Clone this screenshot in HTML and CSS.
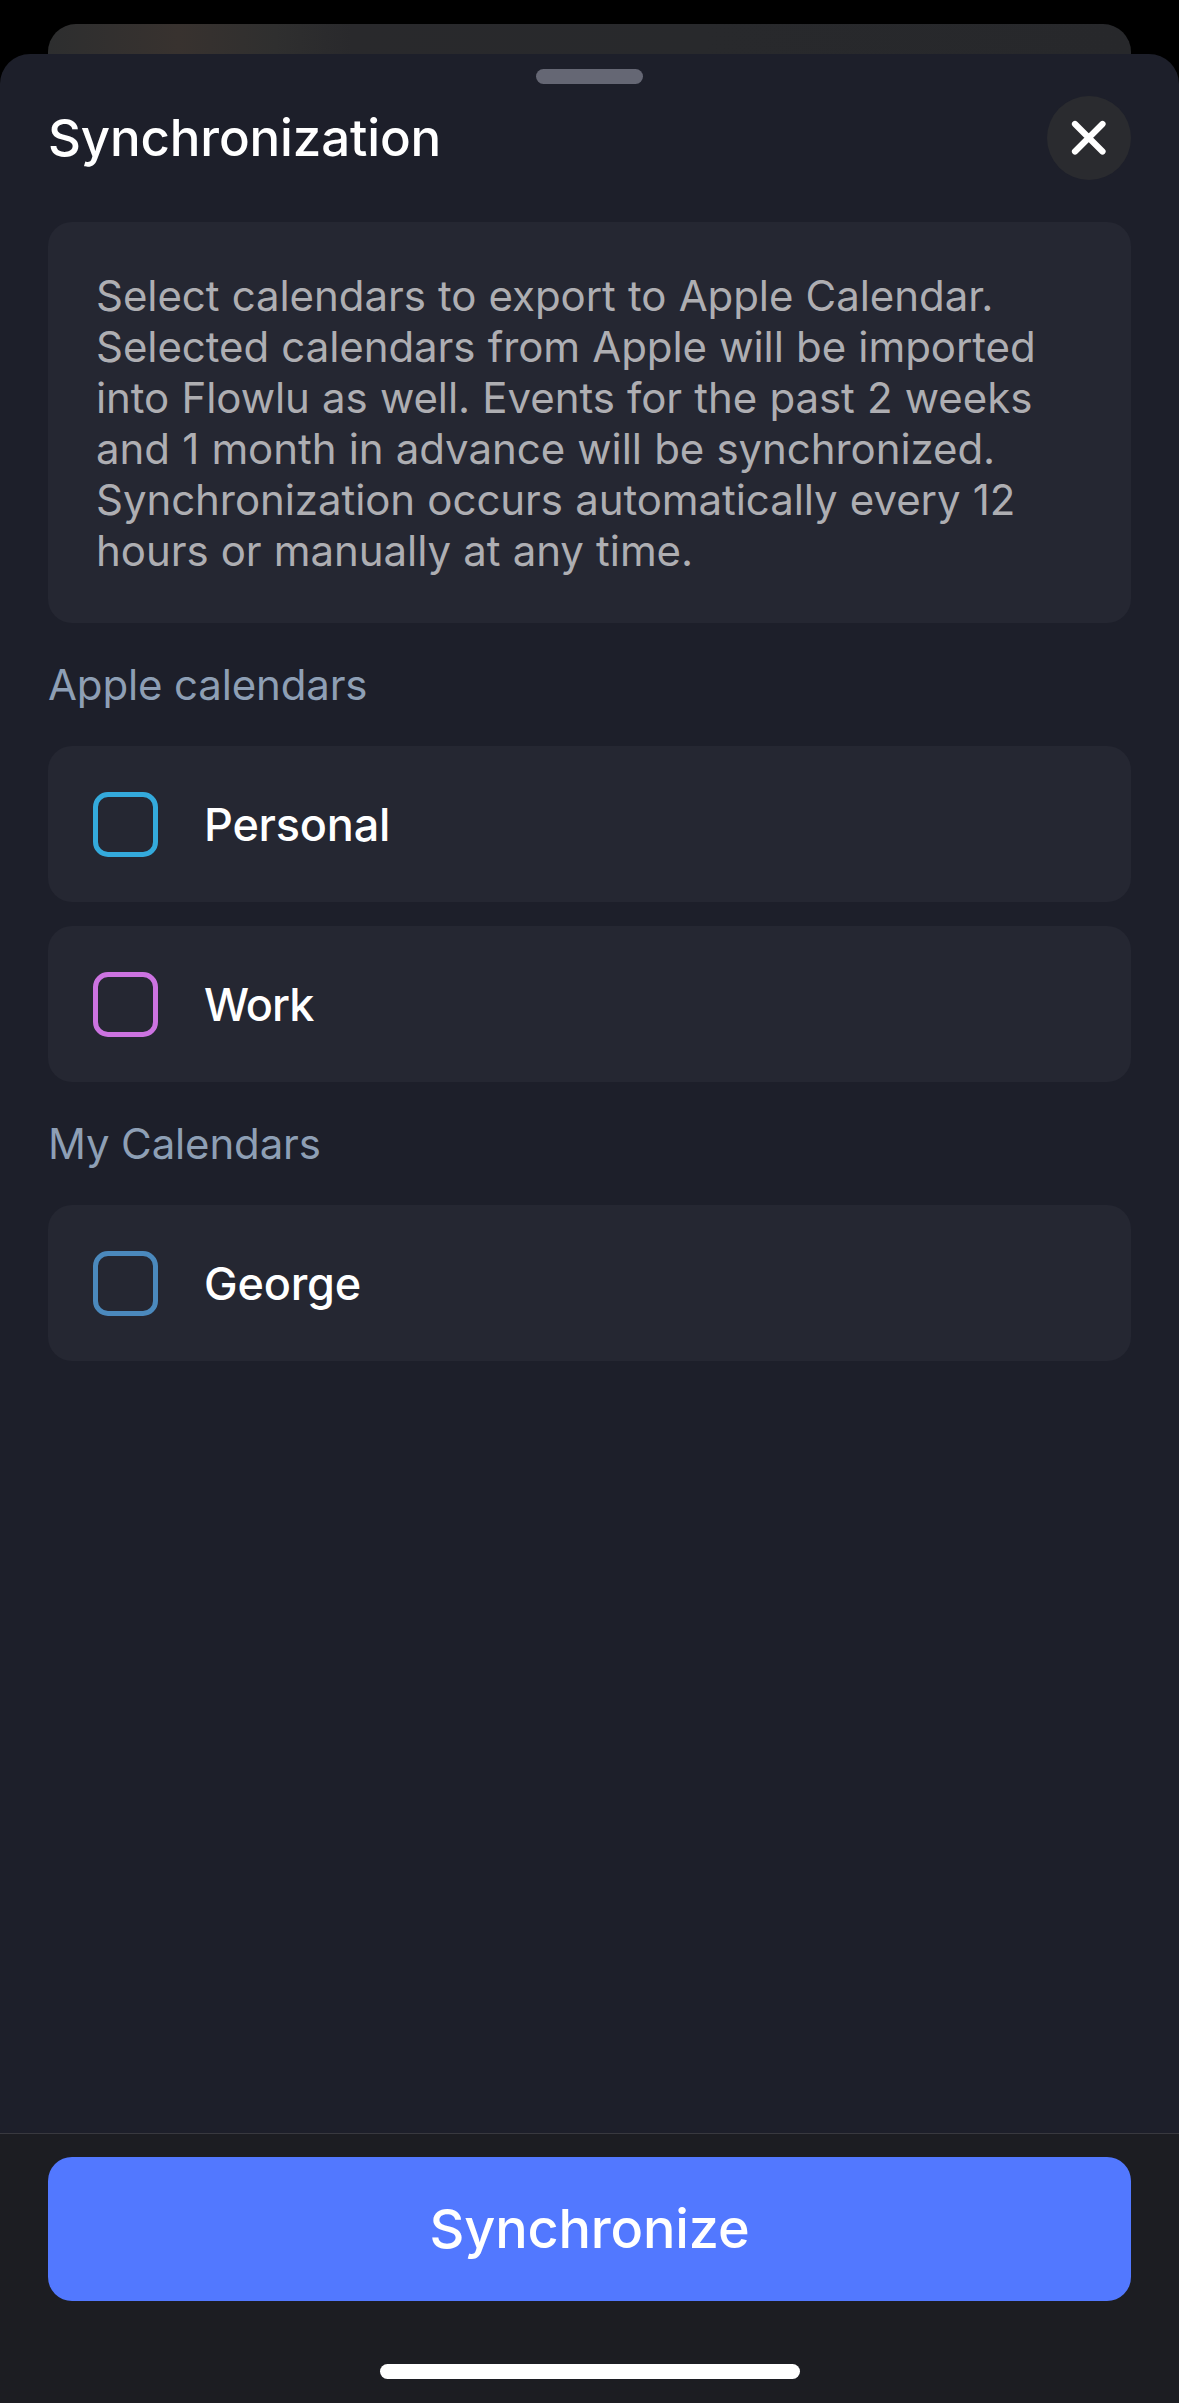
FILE: index.html
```
<!DOCTYPE html>
<html lang="en">
<head>
    <meta charset="UTF-8">
    <meta name="viewport" content="width=device-width, initial-scale=1.0">
    <title>Synchronization</title>
    <link rel="stylesheet" href="styles.css">
</head>
<body>
    <div class="backdrop">
        <div class="backdrop__card"></div>
    </div>
    <div class="sheet">
        <div class="sheet__handle"></div>
        <header class="header">
            <h1 class="header__title">Synchronization</h1>
            <button class="header__close" aria-label="Close">
                <svg width="36" height="36" viewBox="0 0 36 36" fill="none" stroke="#ffffff" stroke-width="6.2" stroke-linecap="round">
                    <path d="M4 4L31.5 31.5M31.5 4L4 31.5"/>
                </svg>
            </button>
        </header>
        <main class="content">
            <p class="info">Select calendars to export to Apple Calendar.<br>Selected calendars from Apple will be imported<br>into Flowlu as well. Events for the past 2 weeks<br>and 1 month in advance will be synchronized.<br>Synchronization occurs automatically every 12<br>hours or manually at any time.</p>
            <h2 class="group">Apple calendars</h2>
            <ul class="calendars">
                <li class="calendar"><span class="checkbox checkbox_cyan"></span><span class="calendar__name">Personal</span></li>
                <li class="calendar"><span class="checkbox checkbox_pink"></span><span class="calendar__name calendar__name_tight">Work</span></li>
            </ul>
            <h2 class="group">My Calendars</h2>
            <ul class="calendars">
                <li class="calendar"><span class="checkbox checkbox_blue"></span><span class="calendar__name">George</span></li>
            </ul>
        </main>
        <footer class="footer">
            <button class="footer__button">Synchronize</button>
            <div class="footer__home"></div>
        </footer>
    </div>
</body>
</html>
```
FILE: styles.css
```
* {
    box-sizing: border-box;
}

body {
    margin: 0;
    height: 2403px;
    display: flex;
    flex-direction: column;
    overflow: hidden;
    background-color: #000000;
    color: #ffffff;
    font-family: Inter, sans-serif;
}

button {
    border: none;
    padding: 0;
    color: inherit;
    font-family: inherit;
}

.backdrop {
    height: 54px;
    padding: 24px 48px 0;
}

.backdrop__card {
    height: 30px;
    border-radius: 28px 28px 0 0;
    background: linear-gradient(90deg, #2d2e2f, #38322f 12%, #2f2f2f 21%, #29292c 28%, #28292c 60%, #27282b);
}

.sheet {
    flex: 1;
    display: flex;
    flex-direction: column;
    border-radius: 30px 30px 0 0;
    background-color: #1d1f2a;
    overflow: hidden;
}

.sheet__handle {
    width: 107px;
    height: 15px;
    margin: 15px 0 0 536px;
    border-radius: 8px;
    background-color: #656774;
}

.header {
    display: flex;
    align-items: center;
    justify-content: space-between;
    height: 84px;
    margin: 12px 48px 42px;
}

.header__title {
    margin: 0;
    padding-bottom: 1px;
    font-size: 51px;
    font-weight: 500;
    letter-spacing: -0.15px;
}

.header__close {
    display: flex;
    align-items: center;
    justify-content: center;
    width: 84px;
    height: 84px;
    border-radius: 50%;
    background-color: #2a2b2f;
}

.content {
    flex: 1;
    padding: 0 48px;
}

.info {
    height: 401px;
    margin: 0;
    padding: 48px;
    border-radius: 24px;
    background-color: #252732;
    color: #aeaeb2;
    font-size: 42px;
    line-height: 51px;
    letter-spacing: -0.07px;
    word-spacing: 0.5px;
    white-space: nowrap;
}

.group {
    margin: 0;
    height: 123px;
    line-height: 123px;
    font-size: 42px;
    font-weight: 400;
    letter-spacing: -0.15px;
    color: #8e9fb5;
}

.calendars {
    display: grid;
    gap: 24px;
    margin: 0;
    padding: 0;
    list-style-type: none;
}

.calendar {
    display: flex;
    align-items: center;
    gap: 46px;
    height: 156px;
    padding: 0 45px;
    border-radius: 24px;
    background-color: #252732;
}

.calendar__name {
    font-size: 45px;
    font-weight: 500;
    letter-spacing: -0.2px;
}

.calendar__name_tight {
    letter-spacing: -1px;
}

.checkbox {
    width: 65px;
    height: 65px;
    border: 5px solid;
    border-radius: 15px;
}

.checkbox_cyan {
    border-color: #34aadc;
}

.checkbox_pink {
    border-color: #cc73e1;
}

.checkbox_blue {
    border-color: #4b89bd;
}

.footer {
    height: 270px;
    padding: 23px 48px 0;
    border-top: 1px solid #38393f;
    background-color: #1c1d22;
}

.footer__button {
    display: block;
    width: 100%;
    height: 144px;
    padding-bottom: 2px;
    border-radius: 24px;
    background-color: #5278ff;
    font-size: 54px;
    font-weight: 500;
    letter-spacing: -0.15px;
}

.footer__home {
    width: 420px;
    height: 15px;
    margin: 63px auto 0;
    border-radius: 8px;
    background-color: #ffffff;
}
```
